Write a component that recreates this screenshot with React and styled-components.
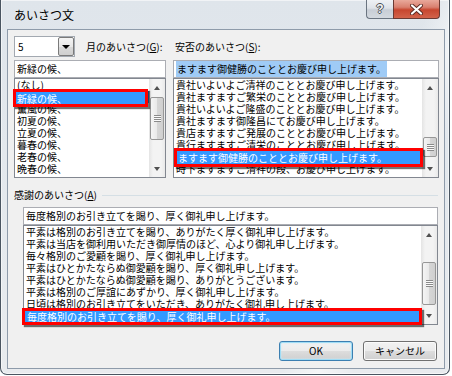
import React from 'react';
import styled, { createGlobalStyle } from 'styled-components';

const Global = createGlobalStyle`
  html, body { margin: 0; padding: 0; background: #ffffff; }
  body {
    font-family: "Noto Sans CJK JP", "Noto Sans", sans-serif;
    font-size: 10px;
    color: #000;
  }
  * { box-sizing: border-box; }
`;

const Window = styled.div`
  width: 450px;
  height: 375px;
  border: 1px solid #4a5561;
  border-top: none;
  border-radius: 0 0 7px 7px;
  padding: 0 4px 5px 6px;
  display: flex;
  flex-direction: column;
  background:
    linear-gradient(112deg, transparent 72%, rgba(255,255,255,0.55) 78%, transparent 84%),
    linear-gradient(180deg, #dfe5eb 0%, #e3e8ed 40%, #e8ebee 100%);
  box-shadow: inset 0 0 0 1px rgba(255,255,255,0.55);
`;

const TitleBar = styled.div`
  height: 29px;
  display: flex;
  justify-content: space-between;
  align-items: flex-start;
`;

const Title = styled.div`
  padding: 8px 0 0 7px;
  font-size: 12px;
  line-height: 14px;
  color: #000;
`;

const CaptionButtons = styled.div`
  display: flex;
  margin-right: 5px;
`;

const HelpButton = styled.div`
  width: 27px;
  height: 19px;
  border: 1px solid #6a7480;
  border-top: none;
  border-right: none;
  border-radius: 0 0 0 4px;
  background: linear-gradient(180deg, #eef1f4 0%, #dfe3e8 45%, #c8ced6 55%, #d4d9df 100%);
  display: flex;
  align-items: center;
  justify-content: center;
  font-family: "Liberation Sans", sans-serif;
  font-weight: bold;
  font-size: 12px;
  color: #f4f4f4;
  text-shadow: 1px 0 0 #4a4f55, -1px 0 0 #4a4f55, 0 1px 0 #4a4f55, 0 -1px 0 #4a4f55;
`;

const CloseButton = styled.div`
  width: 47px;
  height: 19px;
  border: 1px solid #6b3a33;
  border-top: none;
  border-radius: 0 0 4px 0;
  background: linear-gradient(180deg, #e9a99b 0%, #d9806f 40%, #c7462f 55%, #d2634a 100%);
  display: flex;
  align-items: center;
  justify-content: center;
`;

const Client = styled.div`
  height: 340px;
  border: 1px solid #8e9baa;
  background: #f0f0f0;
  padding: 6px 5px 7px 6px;
  display: flex;
  flex-direction: column;
`;

const TopGrid = styled.div`
  display: grid;
  grid-template-columns: 152px 266px;
  column-gap: 7px;
`;

const Column = styled.div`
  display: flex;
  flex-direction: column;
`;

const Header = styled.div`
  height: 21px;
  margin-bottom: 3px;
  display: flex;
  align-items: center;
  gap: 11px;
  padding-left: ${p => p.$indent || 0}px;
`;

const Label = styled.span`
  font-size: 10px;
  line-height: 12px;
  white-space: nowrap;
  u { text-decoration: underline; text-underline-offset: 1px; }
`;

const Combo = styled.div`
  width: 61px;
  height: 21px;
  border: 1px solid #a3a9b1;
  background: #fff;
  display: flex;
  align-items: stretch;
`;

const ComboValue = styled.div`
  flex: 1;
  padding-left: 3px;
  font-size: 10px;
  line-height: 19px;
`;

const DropButton = styled.div`
  width: 16px;
  border: 1px solid #7a7a7a;
  border-radius: 2px;
  background: linear-gradient(180deg, #f4f4f4 0%, #e8e8e8 50%, #d9d9d9 51%, #cfcfcf 100%);
  display: flex;
  align-items: center;
  justify-content: center;
  &::after {
    content: "";
    border-left: 4px solid transparent;
    border-right: 4px solid transparent;
    border-top: 4px solid #000;
  }
`;

const TextBox = styled.div`
  height: 18px;
  border: 1px solid #abadb3;
  background: #fff;
  padding-left: 2px;
  font-size: 10px;
  line-height: 16px;
  white-space: nowrap;
  overflow: hidden;
`;

const Selection = styled.span`
  background: #9fcbf6;
  padding: 1px 1px;
`;

const ListBox = styled.div`
  position: relative;
  height: 100px;
  border: 1px solid #828790;
  background: #fff;
  display: flex;
`;

const Items = styled.div`
  flex: 1;
  overflow: hidden;
`;

const Row = styled.div`
  height: 12px;
  line-height: 12px;
  font-size: 10px;
  padding-left: 2px;
  white-space: nowrap;
  background: ${p => (p.$selected ? '#3399ff' : 'transparent')};
  color: ${p => (p.$selected ? '#fff' : '#000')};
`;

const Scrollbar = styled.div`
  width: 16px;
  display: flex;
  flex-direction: column;
  background: linear-gradient(90deg, #e4e4e4 0%, #f3f3f3 25%, #f3f3f3 75%, #e9e9e9 100%);
`;

const Arrow = styled.div`
  height: 17px;
  display: flex;
  align-items: center;
  justify-content: center;
  &::after {
    content: "";
    border-left: 3.5px solid transparent;
    border-right: 3.5px solid transparent;
    ${p => (p.$up ? 'border-bottom: 4px solid #505050;' : 'border-top: 4px solid #505050;')}
  }
`;

const Track = styled.div`
  flex: 1;
  padding-top: ${p => p.$top}px;
`;

const Thumb = styled.div`
  height: ${p => p.$height}px;
  margin: 0 1px;
  border: 1px solid #979797;
  border-radius: 2px;
  background: linear-gradient(90deg, #f5f5f5 0%, #e9e9e9 50%, #d6d6d6 51%, #cfcfcf 100%);
  display: flex;
  align-items: center;
  justify-content: center;
  &::after {
    content: "";
    width: 7px;
    height: 7px;
    background: repeating-linear-gradient(180deg, #8a8a8a 0, #8a8a8a 1px, #fafafa 1px, #fafafa 2px);
    display: ${p => (p.$height > 14 ? 'block' : 'none')};
  }
`;

const Callout = styled.div`
  position: absolute;
  border: 3px solid #ff0000;
  background: #3399ff;
  color: #fff;
  font-size: 10px;
  white-space: nowrap;
  overflow: hidden;
  box-shadow: 2px 2px 1px rgba(0, 0, 0, 0.55);
  display: flex;
  align-items: center;
  padding-left: 1px;
`;

const GroupHeader = styled.div`
  margin-top: 11px;
  height: 12px;
  display: flex;
  align-items: center;
  padding-right: 1px;
`;

const GroupLine = styled.div`
  flex: 1;
  height: 1px;
  margin-left: 5px;
  background: #d5dfe5;
`;

const GroupBody = styled.div`
  margin-top: 6px;
  padding: 0 1px 0 9px;
  display: flex;
  flex-direction: column;
`;

const ButtonRow = styled.div`
  margin-top: 16px;
  display: flex;
  justify-content: flex-end;
  gap: 10px;
  padding-right: 2px;
`;

const Button = styled.div`
  width: 74px;
  height: 20px;
  border: 1px solid ${p => (p.$default ? '#3c7fb1' : '#707070')};
  border-radius: 3px;
  background: linear-gradient(180deg, #f2f2f2 0%, #ebebeb 50%, #dddddd 51%, #cfcfcf 100%);
  box-shadow: ${p => (p.$default ? 'inset 0 0 0 1px #9fdcf5, inset 0 0 2px 1px #c8ecfa' : 'inset 0 0 0 1px #fbfbfb')};
  display: flex;
  align-items: center;
  justify-content: center;
  font-size: 10px;
  line-height: 12px;
`;

function VScroll({ top, height }) {
  return (
    <Scrollbar>
      <Arrow $up />
      <Track $top={top}>
        <Thumb $height={height} />
      </Track>
      <Arrow />
    </Scrollbar>
  );
}

function List({ items, selected, scroll, callout }) {
  return (
    <ListBox>
      <Items>
        {items.map((t, i) => (
          <Row key={i} $selected={i === selected}>{t}</Row>
        ))}
      </Items>
      <VScroll top={scroll[0]} height={scroll[1]} />
      <Callout
        style={{
          left: callout.left,
          top: callout.top,
          width: callout.width,
          height: callout.height,
          paddingLeft: callout.pad ?? 1,
        }}
      >
        {items[selected]}
      </Callout>
    </ListBox>
  );
}

const monthItems = [
  '(なし)',
  '新緑の候、',
  '薫風の候、',
  '初夏の候、',
  '立夏の候、',
  '暮春の候、',
  '老春の候、',
  '晩春の候、',
];

const healthItems = [
  '貴社いよいよご清祥のこととお慶び申し上げます。',
  '貴社ますますご繁栄のこととお慶び申し上げます。',
  '貴社いよいよご隆盛のこととお慶び申し上げます。',
  '貴社ますます御隆昌にてお慶び申し上げます。',
  '貴店ますますご発展のこととお慶び申し上げます。',
  '貴行ますますご清栄のこととお慶び申し上げます。',
  'ますます御健勝のこととお慶び申し上げます。',
  '時下ますますご清祥の段、お慶び申し上げます。',
];

const thanksItems = [
  '平素は格別のお引き立てを賜り、ありがたく厚く御礼申し上げます。',
  '平素は当店を御利用いただき御厚情のほど、心より御礼申し上げます。',
  '毎々格別のご愛顧を賜り、厚く御礼申し上げます。',
  '平素はひとかたならぬ御愛顧を賜り、厚く御礼申し上げます。',
  '平素はひとかたならぬ御愛顧を賜り、ありがとうございます。',
  '平素は格別のご厚誼にあずかり、厚く御礼申し上げます。',
  '日頃は格別のお引き立てをいただき、ありがたく御礼申し上げます。',
  '毎度格別のお引き立てを賜り、厚く御礼申し上げます。',
];

export default function App() {
  return (
    <>
      <Global />
      <Window>
        <TitleBar>
          <Title>あいさつ文</Title>
          <CaptionButtons>
            <HelpButton>?</HelpButton>
            <CloseButton>
              <svg width="13" height="11" viewBox="0 0 13 11">
                <path d="M2 1.5 L11 9.5 M11 1.5 L2 9.5" stroke="#5a2a22" strokeWidth="4" strokeLinecap="round" />
                <path d="M2 1.5 L11 9.5 M11 1.5 L2 9.5" stroke="#ffffff" strokeWidth="2.2" strokeLinecap="round" />
              </svg>
            </CloseButton>
          </CaptionButtons>
        </TitleBar>
        <Client>
          <TopGrid>
            <Column>
              <Header>
                <Combo>
                  <ComboValue>5</ComboValue>
                  <DropButton />
                </Combo>
                <Label>月のあいさつ(<u>G</u>):</Label>
              </Header>
              <TextBox>新緑の候、</TextBox>
              <List
                items={monthItems}
                selected={1}
                scroll={[1, 43]}
                callout={{ left: -2, top: 10, width: 135, height: 18 }}
              />
            </Column>
            <Column>
              <Header $indent={2}>
                <Label>安否のあいさつ(<u>S</u>):</Label>
              </Header>
              <TextBox>
                <Selection>ますます御健勝のこととお慶び申し上げます。</Selection>
              </TextBox>
              <List
                items={healthItems}
                selected={6}
                scroll={[41, 20]}
                callout={{ left: 0, top: 69, width: 249, height: 19 }}
              />
            </Column>
          </TopGrid>
          <GroupHeader>
            <Label>感謝のあいさつ(<u>A</u>)</Label>
            <GroupLine />
          </GroupHeader>
          <GroupBody>
            <TextBox>毎度格別のお引き立てを賜り、厚く御礼申し上げます。</TextBox>
            <List
              items={thanksItems}
              selected={7}
              scroll={[19, 43]}
              callout={{ left: -2, top: 82, width: 400, height: 17, pad: 2 }}
            />
          </GroupBody>
          <ButtonRow>
            <Button $default>OK</Button>
            <Button>キャンセル</Button>
          </ButtonRow>
        </Client>
      </Window>
    </>
  );
}
